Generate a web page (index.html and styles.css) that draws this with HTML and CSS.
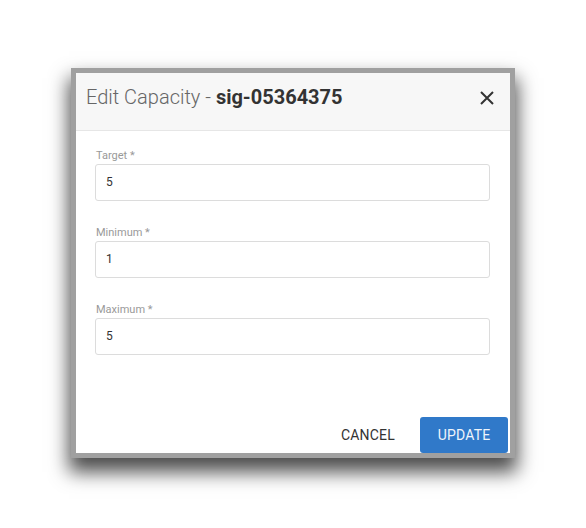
FILE: index.html
```html
<!DOCTYPE html>
<html>
<head>
<meta charset="utf-8">
<link rel="stylesheet" href="styles.css">
</head>
<body>
<div class="page">
  <div class="dialog">
    <div class="dialog-inner">
      <div class="header">
        <h1 class="title"><span class="title-light">Edit Capacity - </span><span class="title-bold">sig-05364375</span></h1>
        <button class="close" aria-label="Close">
          <svg width="14" height="14" viewBox="0 0 14 14"><path d="M1 1 L13 13 M13 1 L1 13" stroke="#333" stroke-width="2" fill="none"/></svg>
        </button>
      </div>
      <div class="body">
        <div class="field">
          <label class="label">Target *</label>
          <div class="input">5</div>
        </div>
        <div class="field">
          <label class="label">Minimum *</label>
          <div class="input">1</div>
        </div>
        <div class="field">
          <label class="label">Maximum *</label>
          <div class="input">5</div>
        </div>
      </div>
      <div class="footer">
        <button class="btn btn-cancel">CANCEL</button>
        <button class="btn btn-update">UPDATE</button>
      </div>
    </div>
  </div>
</div>
</body>
</html>
```
FILE: styles.css
```css
* { box-sizing: border-box; }
html, body { margin: 0; padding: 0; background: #fff; }
body { font-family: Roboto, "Liberation Sans", sans-serif; min-height: 528px; }
.page { padding: 68px 0 70px 71px; }
.dialog {
  width: 444px;
  height: 390px;
  border: 5px solid #a0a0a0;
  background: #fff;
  box-shadow: 0 12px 18px 2px rgba(0,0,0,0.7);
}
.dialog-inner {
  height: 100%;
  display: flex;
  flex-direction: column;
}
.header {
  height: 58px;
  background: #f7f7f7;
  border-bottom: 1px solid #e6e6e6;
  display: flex;
  align-items: flex-start;
  justify-content: space-between;
  padding: 12px 16px 0 10px;
}
.title {
  margin: 0;
  font-size: 20px;
  line-height: 24px;
  font-weight: 400;
  color: #333;
}
.title-light { font-weight: 300; color: #666; }
.title-bold { font-weight: 700; color: #333; }
.close {
  border: 0;
  background: none;
  padding: 0;
  margin-top: 6px;
  width: 14px;
  height: 14px;
  display: block;
}
.close svg { display: block; }
.body {
  padding: 18px 20px 0 19px;
  display: flex;
  flex-direction: column;
  gap: 25px;
}
.field { display: flex; flex-direction: column; }
.label {
  font-size: 11px;
  line-height: 14px;
  color: #999;
  margin-bottom: 1px;
  padding-left: 1px;
}
.input {
  height: 37px;
  border: 1px solid #dcdcdc;
  border-radius: 3px;
  padding: 0 10px;
  font-size: 12px;
  line-height: 35px;
  color: #333;
}
.footer {
  margin-top: auto;
  display: flex;
  justify-content: flex-end;
  align-items: center;
  padding-right: 2px;
  gap: 9px;
}
.btn {
  font-family: Roboto, "Liberation Sans", sans-serif;
  font-size: 14px;
  height: 36px;
  border: 0;
  border-radius: 3px;
  padding: 0 16px;
  letter-spacing: 0.2px;
}
.btn-cancel { background: none; color: #333; }
.btn-update { background: #3079c9; color: #eef4fb; width: 88px; }
```
